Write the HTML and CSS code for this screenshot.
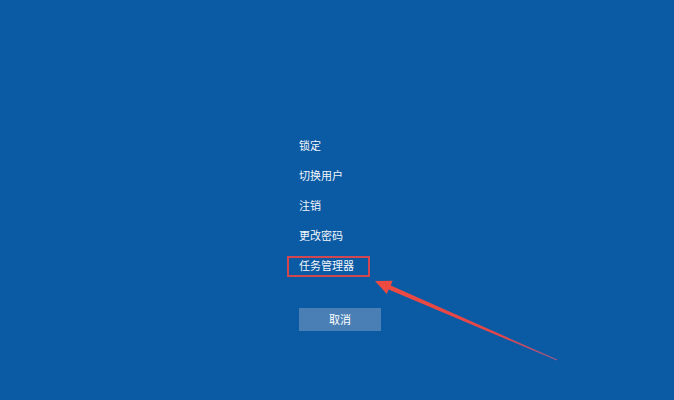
FILE: index.html
```html
<!DOCTYPE html>
<html lang="zh-CN">
<head>
<meta charset="utf-8">
<title>Ctrl+Alt+Del</title>
<link rel="stylesheet" href="styles.css">
</head>
<body>
<div class="screen">
  <ul class="menu">
    <li class="item">锁定</li>
    <li class="item">切换用户</li>
    <li class="item">注销</li>
    <li class="item">更改密码</li>
    <li class="item highlighted">任务管理器</li>
  </ul>
  <div class="actions">
    <button class="cancel">取消</button>
  </div>
  <svg class="arrow" width="674" height="400" viewBox="0 0 674 400">
    <defs>
      <linearGradient id="fade" x1="375" y1="281" x2="557" y2="360" gradientUnits="userSpaceOnUse">
        <stop offset="0" stop-color="#ee4a40"/>
        <stop offset="0.7" stop-color="#e2474a"/>
        <stop offset="1" stop-color="#9a5a8e"/>
      </linearGradient>
    </defs>
    <polygon points="375,281 392.6,280.8 390.8,285.4 557.3,359.6 556.8,360.4 388.6,289.6 386.8,294" fill="url(#fade)"/>
  </svg>
</div>
</body>
</html>
```
FILE: styles.css
```css
html, body {
  margin: 0;
  padding: 0;
}
body {
  background: #0b5aa4;
  font-family: "Noto Sans CJK SC", "Microsoft YaHei", sans-serif;
  color: #ffffff;
}
.screen {
  position: relative;
  width: 674px;
  height: 400px;
  overflow: hidden;
}
.menu {
  list-style: none;
  margin: 0;
  padding: 130px 0 0 287px;
}
.item {
  position: relative;
  height: 30px;
  line-height: 30px;
  padding-left: 12px;
  font-size: 11px;
  color: #f2f6fb;
}
.highlighted::after {
  content: "";
  position: absolute;
  left: 0;
  top: 6px;
  width: 83px;
  height: 21px;
  box-sizing: border-box;
  border: 2px solid #d2464f;
}
.actions {
  padding: 28px 0 0 299px;
}
.cancel {
  display: block;
  width: 82px;
  height: 23px;
  margin: 0;
  padding: 0;
  border: none;
  background: #4a7fb6;
  color: #ffffff;
  font-family: "Noto Sans CJK SC", sans-serif;
  font-size: 11px;
  line-height: 23px;
  text-align: center;
}
.arrow {
  position: absolute;
  left: 0;
  top: 0;
}
```
